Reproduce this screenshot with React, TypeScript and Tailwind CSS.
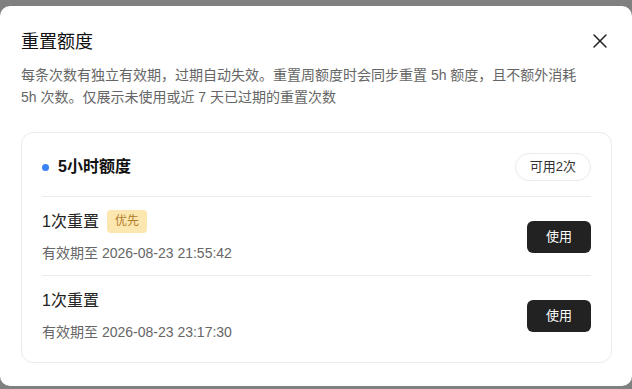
import { X } from 'lucide-react';

interface ResetItem {
  id: number;
  label: string;
  priority: boolean;
  expiresAt: string;
}

const items: ResetItem[] = [
  { id: 1, label: '1次重置', priority: true, expiresAt: '2026-08-23 21:55:42' },
  { id: 2, label: '1次重置', priority: false, expiresAt: '2026-08-23 23:17:30' },
];

export default function App() {
  return (
    <div
      className="w-[632px] h-[389px] bg-[#808080] pt-[6px] overflow-hidden"
      style={{ fontFamily: '"Liberation Sans", "Noto Sans CJK SC", sans-serif' }}
    >
      <div className="h-[380px] bg-white rounded-[10px] px-[21px] pt-[23px]">
        <div className="flex items-center justify-between h-[26px]">
          <h2 className="text-[18px] leading-[26px] text-[#111]">重置额度</h2>
          <button className="w-[24px] h-[24px] flex items-center justify-center text-[#222] mr-[-1px] mt-[-2px]">
            <X className="w-[24px] h-[24px]" strokeWidth={1.5} />
          </button>
        </div>

        <p className="mt-[9px] text-[14px] leading-[22px] text-[#666]">
          每条次数有独立有效期，过期自动失效。重置周额度时会同步重置 5h 额度，且不额外消耗
          <br />
          5h 次数。仅展示未使用或近 7 天已过期的重置次数
        </p>

        <div className="mt-[24px] mr-[-1px] border border-[#ebebeb] rounded-[12px] px-[20px] pt-[20px] pb-[8px]">
          <div className="flex items-center justify-between pb-[15px] border-b border-[#ebebeb]">
            <div className="flex items-center">
              <span className="w-[7px] h-[7px] rounded-full bg-[#3b82f6] mr-[9px]" />
              <span className="text-[16px] font-bold text-[#111] leading-[22px]">5小时额度</span>
            </div>
            <span className="h-[28px] px-[14px] rounded-full border border-[#ebebeb] text-[13px] leading-[26px] text-[#333]">
              可用2次
            </span>
          </div>

          {items.map((item, i) => (
            <div
              key={item.id}
              className={`flex items-center justify-between pt-[13px] pb-[12px] ${
                i < items.length - 1 ? 'border-b border-[#ebebeb]' : ''
              }`}
            >
              <div>
                <div className="flex items-center h-[23px]">
                  <span className="text-[16px] leading-[23px] text-[#222]">{item.label}</span>
                  {item.priority && (
                    <span className="ml-[8px] h-[23px] px-[8px] rounded-[4px] bg-[#fde7b0] text-[12px] leading-[23px] text-[#b07d2b]">
                      优先
                    </span>
                  )}
                </div>
                <div className="mt-[10px] text-[14px] leading-[20px] text-[#666]">
                  有效期至 {item.expiresAt}
                </div>
              </div>
              <button className="w-[64px] h-[32px] rounded-[6px] bg-[#222] text-white text-[13px]">
                使用
              </button>
            </div>
          ))}
        </div>
      </div>
    </div>
  );
}
